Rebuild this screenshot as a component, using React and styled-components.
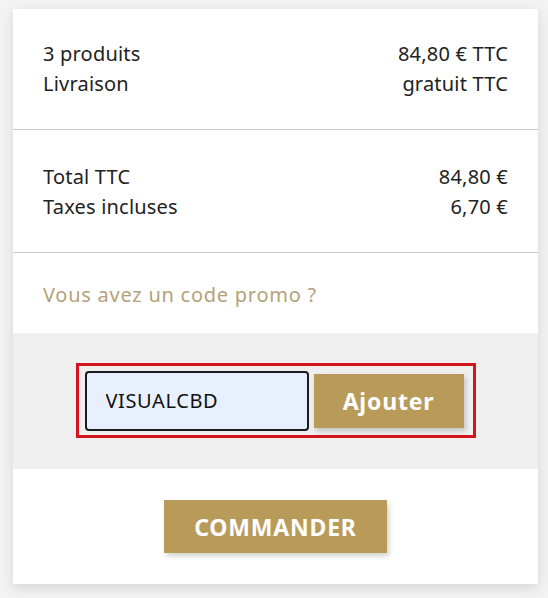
import React from "react";
import styled, { createGlobalStyle } from "styled-components";

const GlobalStyle = createGlobalStyle`
  body {
    margin: 0;
    background-color: #f3f3f3;
    font-family: "Noto Sans", "Open Sans", sans-serif;
  }
`;

const Page = styled.div`
  padding: 9px 10px 15px 13px;
`;

const Card = styled.div`
  width: 525px;
  background-color: #fff;
  box-shadow: 0 4px 12px rgba(0, 0, 0, 0.12);
`;

const Section = styled.div`
  padding: ${({ pad }) => pad};
  border-bottom: ${({ line }) => (line ? "1px solid #c9c9c9" : "none")};
  background-color: ${({ gray }) => (gray ? "#efefef" : "#fff")};
  display: ${({ center }) => (center ? "flex" : "block")};
  justify-content: center;
`;

const Row = styled.div`
  display: flex;
  justify-content: space-between;
  font-size: 20px;
  line-height: 30px;
  letter-spacing: 0.2px;
  color: #222;
`;

const PromoLink = styled.a`
  font-size: 20px;
  line-height: 30px;
  letter-spacing: 0.75px;
  color: #b3a27b;
  text-decoration: none;
  cursor: pointer;
`;

const PromoForm = styled.form`
  display: flex;
  align-items: center;
  gap: 5px;
  width: 400px;
  height: 75px;
  box-sizing: border-box;
  border: 3px solid #d4141c;
  padding: 0 9px 0 6px;
`;

const CodeInput = styled.input`
  width: 224px;
  height: 60px;
  box-sizing: border-box;
  border: 2px solid #1c1c1c;
  border-radius: 4px;
  background-color: #e8f0fe;
  padding: 0 17px 0 19px;
  font-family: inherit;
  font-size: 20px;
  letter-spacing: 0.6px;
  color: #111;
  outline: none;
`;

const GoldButton = styled.button`
  width: ${({ w }) => w}px;
  height: ${({ h }) => h}px;
  border: none;
  background-color: #b99b59;
  color: #fff;
  font-family: inherit;
  font-weight: 700;
  font-size: 23px;
  letter-spacing: 0.8px;
  box-shadow: 2px 3px 5px rgba(0, 0, 0, 0.18);
  cursor: pointer;
`;

export default function App() {
  return (
    <>
      <GlobalStyle />
      <Page>
        <Card>
          <Section pad="30px 30px 30px 30px" line>
            <Row>
              <span>3 produits</span>
              <span>84,80 € TTC</span>
            </Row>
            <Row>
              <span>Livraison</span>
              <span>gratuit TTC</span>
            </Row>
          </Section>
          <Section pad="32px 30px 30px 30px" line>
            <Row>
              <span>Total TTC</span>
              <span>84,80 €</span>
            </Row>
            <Row>
              <span>Taxes incluses</span>
              <span>6,70 €</span>
            </Row>
          </Section>
          <Section pad="27px 30px 23px 30px">
            <PromoLink>Vous avez un code promo ?</PromoLink>
          </Section>
          <Section pad="30px 0 31px 0" gray center>
            <PromoForm onSubmit={(e) => e.preventDefault()}>
              <CodeInput type="text" defaultValue="VISUALCBD" />
              <GoldButton type="submit" w={150} h={54}>
                Ajouter
              </GoldButton>
            </PromoForm>
          </Section>
          <Section pad="31px 0 31px 0" center>
            <GoldButton type="button" w={223} h={53}>
              COMMANDER
            </GoldButton>
          </Section>
        </Card>
      </Page>
    </>
  );
}
